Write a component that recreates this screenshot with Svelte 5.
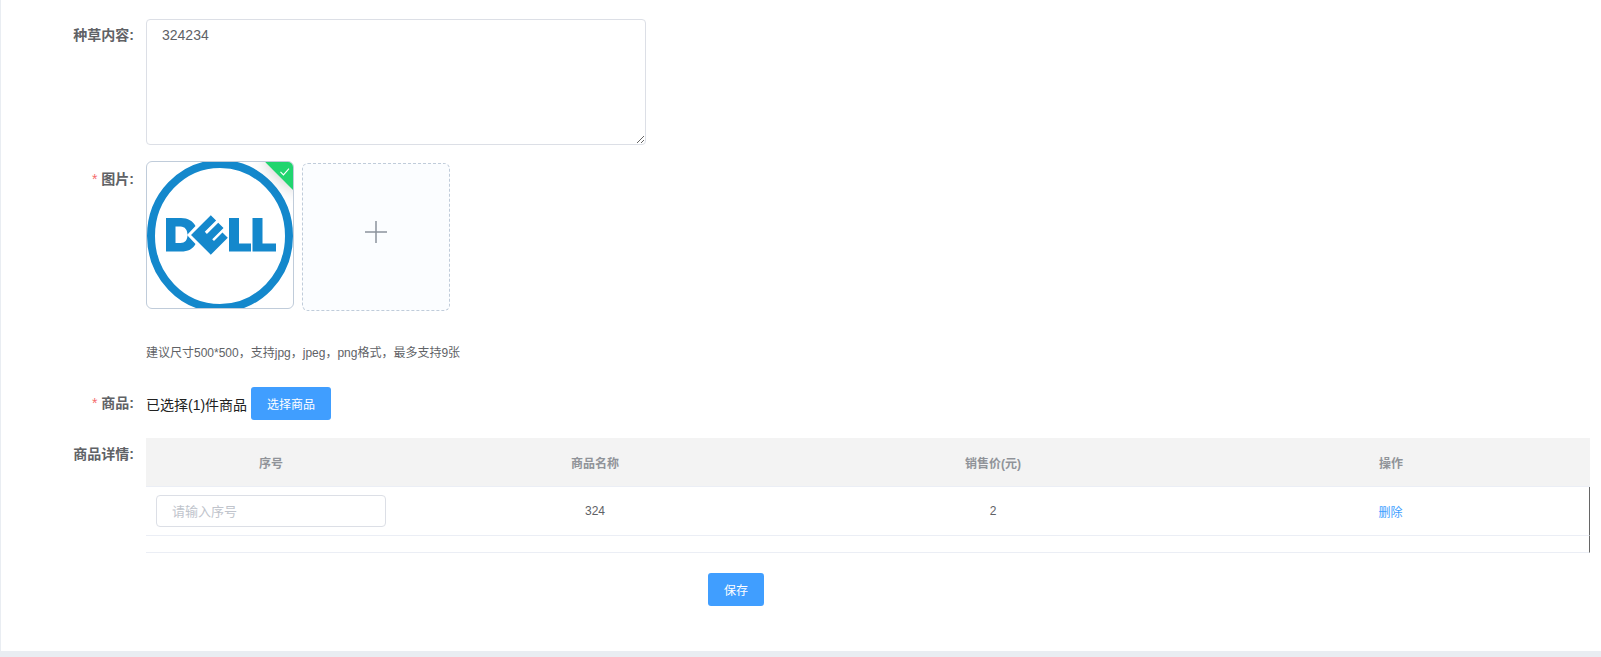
<script>
  const columns = ['序号', '商品名称', '销售价(元)', '操作'];
</script>

<div class="page">
  <form class="form">
    <div class="row row-content">
      <div class="label">种草内容:</div>
      <textarea class="textarea">324234</textarea>
    </div>

    <div class="row row-images">
      <div class="label label-images"><span class="star">*</span> 图片:</div>
      <div class="field">
        <div class="uploads">
          <div class="thumb">
            <svg class="dell" viewBox="0 0 146 146" width="146" height="146" aria-label="Dell logo">
              <ellipse cx="73" cy="74" rx="69" ry="72" fill="none" stroke="#1488cc" stroke-width="8" />
              <path fill="#1488cc" fill-rule="evenodd" d="M19 56H34C41 56 46 59 48.5 64L40 73L48.5 82C46 87 41 89.5 34 89.5H19ZM28.5 64.500V81H33.500C38 81 40.500 78 40.500 73C40.500 68 38 64.500 33.500 64.500Z" />
              <g transform="translate(44 73) rotate(-45)">
                <path fill="#1488cc" d="M0 0H28V7.500H12V10.500H28V18H12V20.500H24V28H0Z" />
              </g>
              <path fill="#1488cc" d="M82 56H92V81.500H104V89.500H82ZM105.500 56H115.500V81.500H129V89.500H105.500Z" />
            </svg>
            <div class="status">
              <svg class="check" viewBox="0 0 12 12" width="12" height="12">
                <path d="M2 6.300L5 9.300L10.500 3.200" fill="none" stroke="#fff" stroke-width="1.100" />
              </svg>
            </div>
          </div>
          <div class="add">
            <svg viewBox="0 0 24 24" width="24" height="24">
              <path d="M12 1V23M1 12H23" fill="none" stroke="#8c939d" stroke-width="1.500" />
            </svg>
          </div>
        </div>
        <div class="hint">建议尺寸500*500&#xFF0C;支持jpg&#xFF0C;jpeg&#xFF0C;png格式&#xFF0C;最多支持9张</div>
      </div>
    </div>

    <div class="row row-goods">
      <div class="label label-goods"><span class="star">*</span> 商品:</div>
      <div class="goods">
        <span class="selected">已选择(1)件商品</span>
        <button type="button" class="btn btn-select">选择商品</button>
      </div>
    </div>

    <div class="row row-detail">
      <div class="label">商品详情:</div>
      <table class="table">
        <colgroup>
          <col class="col-first" />
          <col class="col-rest" />
          <col class="col-rest" />
          <col class="col-rest" />
        </colgroup>
        <thead>
          <tr>
            {#each columns as column}
              <th>{column}</th>
            {/each}
          </tr>
        </thead>
        <tbody>
          <tr class="data-row">
            <td class="input-cell"><input class="input" placeholder="请输入序号" /></td>
            <td>324</td>
            <td>2</td>
            <td class="last"><a class="link" href="#delete">删除</a></td>
          </tr>
          <tr class="empty-row">
            <td></td>
            <td></td>
            <td></td>
            <td class="last"></td>
          </tr>
        </tbody>
      </table>
    </div>

    <div class="actions">
      <button type="button" class="btn btn-save">保存</button>
    </div>
  </form>
</div>

<style>
  :global(body) {
    margin: 0;
    background: #e9edf2;
  }

  .page {
    box-sizing: border-box;
    height: 651px;
    background: #fff;
    border-left: 1px solid #e9edf2;
    font-family: "Liberation Sans", "Noto Sans CJK SC", sans-serif;
    overflow: hidden;
  }

  .form {
    padding: 19px 11px 0 0;
  }

  .row {
    display: flex;
    align-items: flex-start;
  }

  .label {
    box-sizing: border-box;
    flex: 0 0 145px;
    padding-right: 12px;
    text-align: right;
    font-size: 14px;
    font-weight: 700;
    line-height: 32px;
    color: #606266;
  }

  .star {
    color: #f56c6c;
    font-weight: 400;
  }

  .textarea {
    display: block;
    box-sizing: border-box;
    width: 500px;
    height: 126px;
    padding: 5px 15px;
    border: 1px solid #dcdfe6;
    border-radius: 4px;
    outline: none;
    font: 14px/1.5 "Liberation Sans", "Noto Sans CJK SC", sans-serif;
    color: #606266;
    background: #fff;
  }

  .row-images {
    margin-top: 16px;
  }

  .label-images {
    margin-top: 2px;
  }

  .uploads {
    display: flex;
    align-items: flex-start;
    gap: 8px;
  }

  .thumb {
    position: relative;
    box-sizing: border-box;
    width: 148px;
    height: 148px;
    border: 1px solid #c0ccda;
    border-radius: 6px;
    background: #fff;
    overflow: hidden;
  }

  .dell {
    display: block;
    filter: blur(0.4px);
  }

  .status {
    position: absolute;
    top: -6px;
    right: -15px;
    width: 40px;
    height: 24px;
    background: #21d56f;
    transform: rotate(45deg);
    box-shadow: 0 0 16px 1px rgba(0, 0, 0, 0.2);
    text-align: center;
  }

  .check {
    display: block;
    margin: 11px auto 0;
    transform: rotate(-45deg);
  }

  .add {
    box-sizing: border-box;
    display: flex;
    align-items: center;
    justify-content: center;
    width: 148px;
    height: 148px;
    margin-top: 2px;
    border: 1px dashed #c0ccda;
    border-radius: 6px;
    background: #fbfdff;
  }

  .add svg {
    display: block;
    margin-bottom: 11px;
  }

  .hint {
    margin-top: 33px;
    font-size: 12px;
    line-height: 18px;
    color: #606266;
  }

  .row-goods {
    margin-top: 25px;
  }

  .label-goods {
    line-height: 33px;
  }

  .goods {
    display: flex;
    align-items: center;
    gap: 4px;
    height: 33px;
  }

  .selected {
    font-size: 14px;
    color: #222;
  }

  .btn {
    box-sizing: border-box;
    height: 33px;
    padding: 0;
    border: 0;
    border-radius: 3px;
    background: #409eff;
    color: #fff;
    font: 12px "Liberation Sans", "Noto Sans CJK SC", sans-serif;
  }

  .btn-select {
    width: 80px;
  }

  .btn-save {
    width: 56px;
  }

  .row-detail {
    margin-top: 18px;
  }

  .table {
    flex: 0 0 1444px;
    width: 1444px;
    table-layout: fixed;
    border-collapse: separate;
    border-spacing: 0;
    font-size: 12px;
    color: #606266;
  }

  .col-first {
    width: 250px;
  }

  .col-rest {
    width: 398px;
  }

  th,
  td {
    padding: 0;
    text-align: center;
    border-bottom: 1px solid #ebeef5;
  }

  th {
    height: 48px;
    background: #f3f3f3;
    color: #909399;
    font-weight: 700;
  }

  .data-row td {
    height: 48px;
  }

  .empty-row td {
    height: 16px;
  }

  .last {
    border-right: 1px solid #666;
  }

  .input-cell {
    padding: 0 10px;
    text-align: left;
  }

  .input {
    display: block;
    box-sizing: border-box;
    width: 230px;
    height: 32px;
    padding: 0 15px;
    border: 1px solid #dcdfe6;
    border-radius: 4px;
    outline: none;
    font: 13px "Liberation Sans", "Noto Sans CJK SC", sans-serif;
    color: #606266;
  }

  .input::placeholder {
    color: #c0c4cc;
    opacity: 1;
  }

  .link {
    color: #409eff;
    text-decoration: none;
  }

  .actions {
    margin-top: 20px;
    padding-left: 707px;
  }
</style>
